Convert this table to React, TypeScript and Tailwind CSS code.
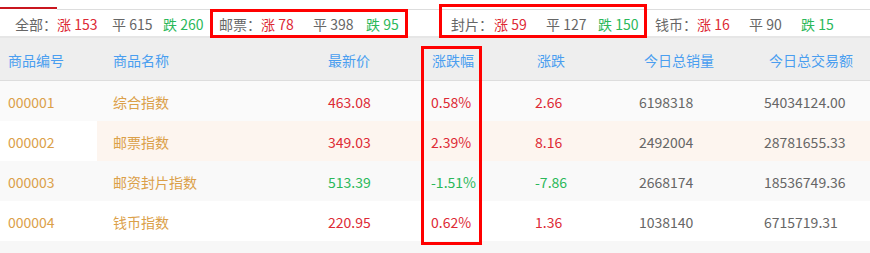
import React from "react";

type Stat = { label: string; widths: number[]; up: number; flat: number; down: number };

const stats: Stat[] = [
  { label: "全部：", widths: [42, 55, 51, 56], up: 153, flat: 615, down: 260 },
  { label: "邮票：", widths: [42, 52, 53, 85], up: 78, flat: 398, down: 95 },
  { label: "封片：", widths: [43, 52, 52, 57], up: 59, flat: 127, down: 150 },
  { label: "钱币：", widths: [42, 52, 52, 60], up: 16, flat: 90, down: 15 },
];

type Row = {
  code: string;
  name: string;
  price: string;
  pct: string;
  chg: string;
  vol: string;
  amount: string;
  down?: boolean;
};

const rows: Row[] = [
  { code: "000001", name: "综合指数", price: "463.08", pct: "0.58%", chg: "2.66", vol: "6198318", amount: "54034124.00" },
  { code: "000002", name: "邮票指数", price: "349.03", pct: "2.39%", chg: "8.16", vol: "2492004", amount: "28781655.33" },
  { code: "000003", name: "邮资封片指数", price: "513.39", pct: "-1.51%", chg: "-7.86", vol: "2668174", amount: "18536749.36", down: true },
  { code: "000004", name: "钱币指数", price: "220.95", pct: "0.62%", chg: "1.36", vol: "1038140", amount: "6715719.31" },
];

const rowBg = ["bg-[#fafafa]", "bg-[#fdf5ef]", "bg-[#f9f9f9]", "bg-white"];
const cols = "grid grid-cols-[97px_215px_104px_104px_104px_125px_1fr]";

export default function App() {
  return (
    <div
      className="relative w-[870px] h-[253px] bg-[#f7f7f7] overflow-hidden text-[14px]"
      style={{ fontFamily: '"Noto Sans CJK SC", "Open Sans", sans-serif' }}
    >
      <div className="bg-white">
        {/* tab indicator */}
        <div className="h-[7px]" />
        <div className="flex items-end h-[3px]">
          <div className="w-[57px] h-[2px] bg-[#c9161f] self-start" />
          <div className="flex-1 h-px bg-[#dddddd]" />
        </div>
        {/* summary */}
        <div className="flex items-center h-[28px] pl-[15px] pt-[2px] border-b-2 border-[#e6e6e6] leading-none whitespace-nowrap">
          {stats.map((s) => (
            <div key={s.label} className="flex items-center shrink-0">
              <span className="shrink-0 text-[#666]" style={{ width: s.widths[0] }}>{s.label}</span>
              <span className="shrink-0 text-[#dd2a35]" style={{ width: s.widths[1] }}>涨 {s.up}</span>
              <span className="shrink-0 text-[#666]" style={{ width: s.widths[2] }}>平 {s.flat}</span>
              <span className="shrink-0 text-[#2bb85a]" style={{ width: s.widths[3] }}>跌 {s.down}</span>
            </div>
          ))}
        </div>
      </div>

      {/* table */}
      <div className={`${cols} h-[43px] items-center pt-[2px] bg-[#eeeeee] border-b border-[#dddddd] text-[#4a9ef0]`}>
        <div className="pl-2">商品编号</div>
        <div className="pl-4">商品名称</div>
        <div className="pl-4">最新价</div>
        <div className="pl-4">涨跌幅</div>
        <div className="pl-[17px]">涨跌</div>
        <div className="pl-5">今日总销量</div>
        <div className="pl-5">今日总交易额</div>
      </div>
      {rows.map((r, i) => {
        const c = r.down ? "text-[#2bb85a]" : "text-[#dd2a35]";
        return (
          <div key={r.code} className={`${cols} h-[40px] items-center ${rowBg[i]}`}>
            <div className={`pl-2 pt-[3px] h-full flex items-center text-[#dba049] ${i === 1 ? "bg-white" : ""}`}>{r.code}</div>
            <div className="pl-4 pt-[3px] text-[#dba049]">{r.name}</div>
            <div className={`pl-4 pt-[3px] ${c}`}>{r.price}</div>
            <div className={`pl-[15px] pt-[3px] ${c}`}>{r.pct}</div>
            <div className={`pl-[15px] pt-[3px] ${c}`}>{r.chg}</div>
            <div className="pl-[15px] pt-[3px] text-[#666]">{r.vol}</div>
            <div className="pl-[15px] pt-[3px] text-[#666]">{r.amount}</div>
          </div>
        );
      })}

      {/* annotation boxes */}
      <div className="absolute left-[210px] top-[9px] w-[198px] h-[29px] border-[3px] border-[#ff0000]" />
      <div className="absolute left-[439px] top-[4px] w-[208px] h-[34px] border-[3px] border-[#ff0000]" />
      <div className="absolute left-[421px] top-[46px] w-[61px] h-[199px] border-[3px] border-[#ff0000]" />
    </div>
  );
}
